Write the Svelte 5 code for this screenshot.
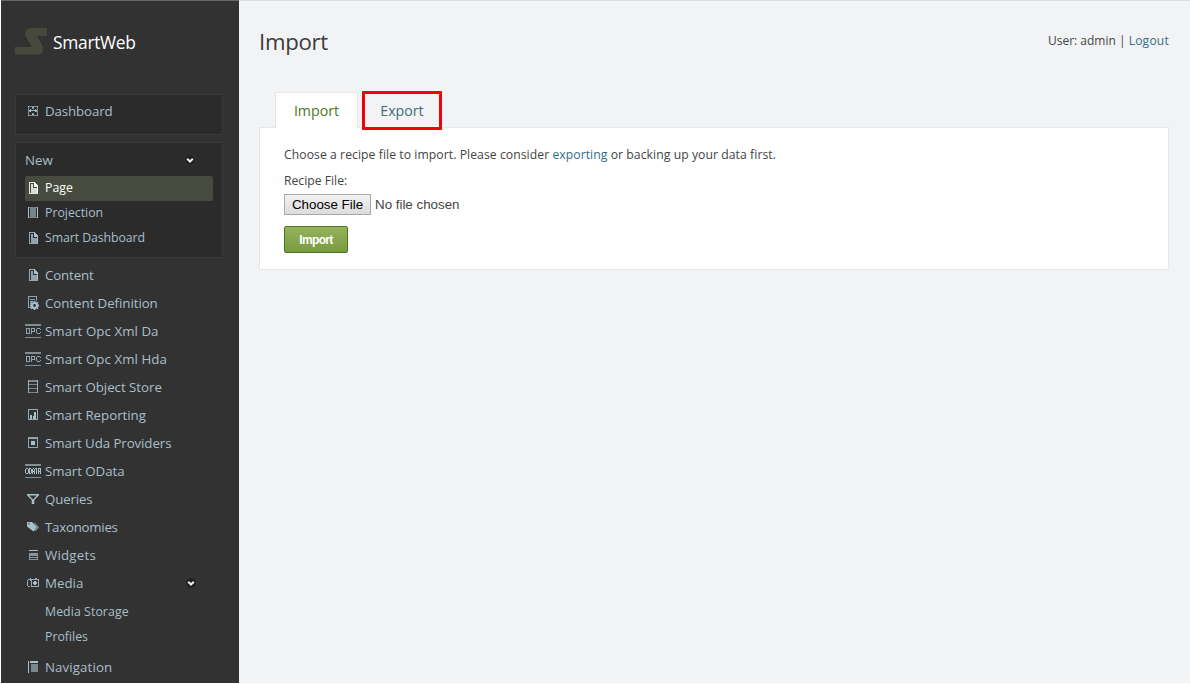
<script>
  const items = [
    ['page', 'Content', -0.15], ['gear', 'Content Definition', -0.06], ['opc', 'Smart Opc Xml Da', 0.05],
    ['opc', 'Smart Opc Xml Hda', 0.05], ['store', 'Smart Object Store', -0.03], ['report', 'Smart Reporting', -0.03],
    ['uda', 'Smart Uda Providers', -0.09], ['odata', 'Smart OData', -0.05], ['filter', 'Queries', -0.15],
    ['tags', 'Taxonomies', -0.26], ['widgets', 'Widgets', 0.2]
  ];
</script>

{#snippet icon(name)}
  <svg class="icon" viewBox="0 0 16 16" width="16" height="16" fill="currentColor" shape-rendering="crispEdges">
    {#if name === 'dashboard'}
      <path d="M3 3h10v1H3zM3 12h10v1H3zM3 3h1v10H3zM12 3h1v10h-1zM7 3h2v3H7zM7 10h2v3H7zM3 7h3v2H3zM10 7h3v2h-3z" opacity=".65" />
      <path d="M7 4h2v1H7zM7 11h2v1H7zM4 7h8v1H4zM5 6h1v3H5zM10 6h1v3h-1zM3 3h1v1H3zM12 3h1v1h-1zM3 12h1v1H3zM12 12h1v1h-1z" />
    {:else if name === 'page'}
      <path d="M4 2h5v1H5v10h8v1H4z" opacity=".85" />
      <path d="M6 4h2v4h5v5H6z" opacity=".8" />
      <path d="M9 2h1v1h1v1h1v1h1v2H9z" />
      <path d="M12 7h1v6h-1z" />
    {:else if name === 'projection'}
      <path d="M3 2h1v11H3zM12 2h1v11h-1z" /><path d="M3 2h10v1H3zM3 12h10v1H3zM5 3h6v9H5z" opacity=".6" />
    {:else if name === 'gear'}
      <path d="M3 1h9v5h-1V2H4v10h3v1H3z" opacity=".8" /><path d="M5 4h5v1H5zM5 6h3v1H5zM5 8h1v1H5zM5 10h1v1H5z" opacity=".8" />
      <g shape-rendering="auto"><circle cx="9.500" cy="10.500" r="3.500" /><path d="M8.600 6h1.800v9H8.600zM5 9.600h9v1.800H5zM6.500 6.800l7 6.500-1 1-7-6.500zM12.500 6.800l1 1-7 6.500-1-1z" /><circle cx="9.500" cy="10.500" r="1.400" fill="#323232" /></g>
    {:else if name === 'opc' || name === 'odata'}
      <path d="M0 1h16v2H0zM0 14h16v1H0z" opacity=".65" />
      {#if name === 'opc'}
        <path d="M1 5h4v1H1zM1 10h4v1H1zM1 6h1v4H1zM4 6h1v4H4zM6 5h1v6H6zM7 5h3v1H7zM9 6h1v2H9zM7 8h3v1H7zM12 5h3v1h-3zM12 10h3v1h-3zM11 6h1v4h-1zM15 6h1v1h-1zM15 9h1v1h-1z" opacity=".8" />
      {:else}
        <path d="M0 6h1v4H0zM1 5h2v1H1zM1 10h2v1H1zM3 6h1v4H3zM4 5h1v6H4zM5 5h1v1H5zM5 10h1v1H5zM6 6h1v4H6zM7 6h1v5H7zM8 5h1v1H8zM8 8h1v1H8zM9 6h1v5H9zM10 5h2v1h-2zM11 6h1v5h-1zM13 5h1v6h-1zM14 5h1v1h-1zM14 8h1v1h-1zM15 5h1v6h-1z" />
      {/if}
    {:else if name === 'store'}
      <path d="M3 1h10v2H3zM3 13h10v1H3zM3 5h10v1H3zM3 9h10v1H3z" opacity=".6" /><path d="M3 1h1v13H3zM12 1h1v13h-1z" opacity=".85" />
    {:else if name === 'report'}
      <path d="M3 2h10v1H3zM3 12h10v1H3zM3 2h1v11H3zM12 2h1v11h-1z" opacity=".85" /><path d="M5 8h2v4H5zM8 9h1v3H8zM9 5h2v7H9z" />
    {:else if name === 'uda'}
      <path d="M3 2h10v2H3zM3 12h10v1H3zM3 2h1v11H3zM12 2h1v11h-1z" opacity=".8" /><path d="M6 6h4v4H6z" />
    {:else if name === 'filter'}
      <path shape-rendering="auto" d="M2 3h12v1.300L9.300 9v4H6.700V9L2 4.300zM4.300 4.500L8 8.500l3.700-4z" fill-rule="evenodd" />
    {:else if name === 'tags'}
      <g shape-rendering="auto"><path d="M2 3h5l5 5-3.500 4.500L2 7.500z" /><path d="M8.500 3.500h1L14 8.500 10.500 12l-1-.7L12.300 8.500z" opacity=".7" /><circle cx="3.800" cy="4.700" r=".7" fill="#323232" /></g>
    {:else if name === 'widgets'}
      <path d="M4 3h9v1H4z" /><path d="M4 6h9v3H4zM4 9h1v4H4zM12 9h1v4h-1zM4 10h9v1H4zM4 12h9v1H4z" opacity=".7" />
    {:else if name === 'media'}
      <path d="M3 4h2v1H3v6h2v1H3V11H2V5h1zM6 4h8v1H6zM6 11h8v1H6zM6 4h1v8H6zM13 4h1v8h-1zM5 3h1v3H5zM10 3h2v1h-2z" opacity=".85" /><path d="M9 6h2v1h1v2h-1v1H9V9H8V7h1z" />
    {:else if name === 'nav'}
      <path d="M3 2h1v12H3zM5 2h8v2H5z" /><path d="M6 5h7v8H6z" opacity=".6" />
    {/if}
  </svg>
{/snippet}

{#snippet arrow()}
  <svg class="arrow" viewBox="0 0 12 12" width="12" height="12"><circle cx="6" cy="6" r="5.300" fill="#1f1f23" stroke="#3a3a42" stroke-width=".6" /><path d="M3.200 4.700L6 7.500l2.800-2.800" fill="none" stroke="#eee" stroke-width="2" /></svg>
{/snippet}

<div class="page">
  <aside>
    <header>
      <svg width="33" height="27" viewBox="0 0 33 27"><path d="M32 0v8H22l6 10.500V22q0 4-4 4.500H0V19h17L10 7q0-6 6-7z" fill="#47493c" /></svg>
      <span class="brand">SmartWeb</span>
    </header>
    <nav>
      <div class="box dash"><div class="row">{@render icon('dashboard')}<span style:letter-spacing="-0.12px">Dashboard</span></div></div>
      <div class="box new">
        <div class="head"><span>New</span>{@render arrow()}</div>
        <div class="sub active">{@render icon('page')}<span>Page</span></div>
        <div class="sub">{@render icon('projection')}<span>Projection</span></div>
        <div class="sub">{@render icon('page')}<span style:letter-spacing="-0.07px">Smart Dashboard</span></div>
      </div>
      <div class="list">
        {#each items as [name, label, spacing]}
          <div class="row">{@render icon(name)}<span style:letter-spacing="{spacing}px">{label}</span></div>
        {/each}
        <div class="row">{@render icon('media')}<span>Media</span>{@render arrow()}</div>
        <div class="children">
          <div class="sub child"><span style:letter-spacing="0.08px">Media Storage</span></div>
          <div class="sub child"><span>Profiles</span></div>
        </div>
        <div class="row last">{@render icon('nav')}<span style:letter-spacing="0.1px">Navigation</span></div>
      </div>
    </nav>
  </aside>
  <main>
    <div class="top"><h1>Import</h1><div class="user">User: admin | <a>Logout</a></div></div>
    <div class="tabs"><div class="tab on">Import</div><div class="tab export">Export</div></div>
    <section>
      <p>Choose a recipe file to import. Please consider <a>exporting</a> or backing up your data first.</p>
      <div class="label">Recipe File:</div>
      <div class="file"><button class="choose">Choose File</button><span>No file chosen</span></div>
      <button class="submit">Import</button>
    </section>
  </main>
</div>

<style>
  :global(body) { margin: 0; background: #fff; }
  .page { box-sizing: border-box; width: 1190px; height: 684px; padding: 0 0 1px 1px; display: flex; overflow: hidden; font-family: "Open Sans", "Noto Sans", sans-serif; }
  aside { width: 238px; box-sizing: border-box; background: #323232; border-top: 1px solid #686868; padding: 0 16px 0 14px; color: #a9bfca; overflow: hidden; }
  header { height: 93px; display: flex; align-items: flex-start; box-sizing: border-box; padding-top: 27px; }
  .brand { color: #fff; font-size: 17.400px; line-height: 29px; margin-left: 5px; letter-spacing: -0.3px; }
  .box { box-sizing: border-box; background: #2b2b2b; border: 1px solid #3a3a3d; border-radius: 2px; width: 208px; }
  .dash { height: 41px; padding: 2px 0 0 9px; }
  .new { height: 116px; margin-top: 7px; padding: 2px 9px; }
  .row { height: 28px; display: flex; align-items: center; font-size: 13.300px; white-space: nowrap; }
  .row span { margin-left: 4px; }
  .icon { flex: none; }
  .arrow { margin-left: auto; flex: none; }
  .head { box-sizing: border-box; height: 31px; display: flex; align-items: center; font-size: 13.300px; padding: 0 17px 2px 0; }
  .sub { box-sizing: border-box; height: 25px; display: flex; align-items: center; font-size: 12.300px; white-space: nowrap; border-radius: 2px; padding-bottom: 2px; }
  .sub span { margin-left: 4px; }
  .active { background: #474a3e; color: #fff; }
  .list { padding: 3px 26px 0 10px; }
  .children { padding-top: 3px; }
  .child { padding-left: 16px; }
  .last { margin-top: 3px; }
  main { flex: 1; background: #f2f3f5; border-top: 1px solid #dcdddf; padding: 0 21px 0 20px; color: #444; }
  .top { height: 91px; box-sizing: border-box; padding-top: 23px; display: flex; justify-content: space-between; }
  h1 { margin: 0; font-size: 22.200px; line-height: 35px; font-weight: 400; color: #3c3c3c; letter-spacing: -0.3px; }
  .user { font-size: 12px; line-height: 34px; }
  a { color: #326c88; }
  .user a { letter-spacing: 0.25px; }
  .tabs { display: flex; align-items: flex-start; padding-left: 16px; height: 35px; position: relative; }
  .tab { box-sizing: border-box; font-size: 14.200px; text-align: center; }
  .on { width: 83px; height: 36px; line-height: 36px; background: #fff; border: 1px solid #e5e7e8; border-bottom: 0; color: #4b7425; }
  .export { width: 80px; height: 39px; margin: -1px 0 0 4px; border: 3px solid #f40008; line-height: 34px; color: #46697c; border-radius: 1px; }
  section { box-sizing: border-box; height: 143px; border: 1px solid #e5e7e8; background: #fff; padding: 14px 24px; font-size: 12.200px; }
  p { margin: 0; line-height: 25px; letter-spacing: 0.06px; }
  .label { line-height: 27px; }
  .file { display: flex; align-items: center; gap: 4px; height: 20px; font: 13.333px "Liberation Sans", sans-serif; }
  .choose { box-sizing: border-box; width: 87px; height: 21px; padding: 0; border: 1px solid #a9a9a9; background: linear-gradient(#f2f2f2, #dcdcdc); font: inherit; color: #000; white-space: nowrap; }
  .submit { display: block; box-sizing: border-box; margin-top: 12px; width: 64px; height: 27px; padding: 0; border: 1px solid #487328; border-radius: 2px; background: linear-gradient(#96b35c, #7a9a40); color: #fff; font: bold 12px "Liberation Sans", sans-serif; letter-spacing: -0.65px; }
</style>
